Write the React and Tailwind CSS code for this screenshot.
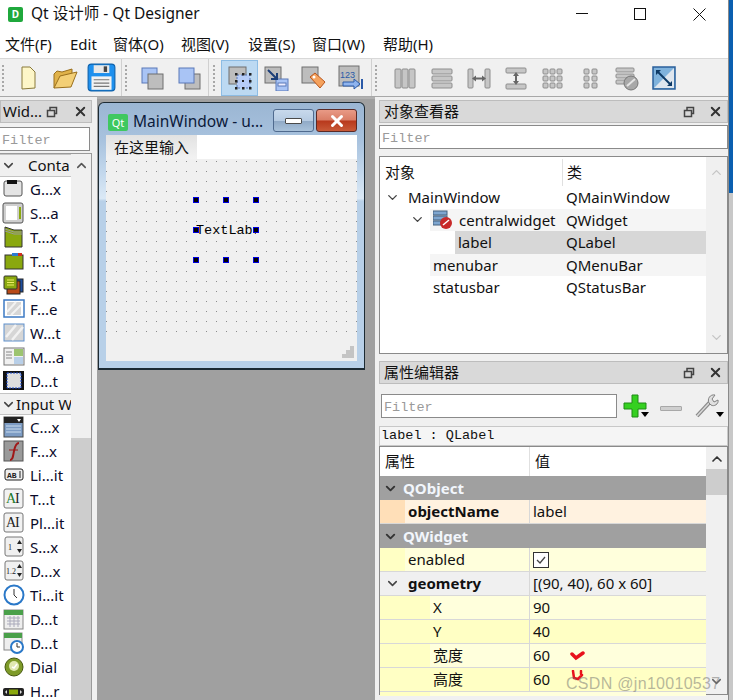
import { ChevronDown, ChevronUp, X } from 'lucide-react'

const mono = "font-['Liberation_Mono','Noto_Sans_CJK_SC',monospace]"

// toolbar icons, all drawn on a 26x26 box
function ToolIcon({ name }) {
  const gray = (x, y, s = 15) => <rect x={x} y={y} width={s} height={s} fill="#bdbdbd" stroke="#6f6f6f" />
  const blue = (x, y, s = 15) => <rect x={x} y={y} width={s} height={s} fill="#a9c4f5" stroke="#5a78b8" />
  const bar = (x, y, w, h, k) => <rect key={k} x={x} y={y} width={w} height={h} rx="1" fill="#c6c6c6" stroke="#8e8e8e" />
  switch (name) {
    case 'new':
      return <path d="M7 2h8l5 5v16l-13 1z" fill="#fdf6c8" stroke="#8a7a3a" />
    case 'open':
      return (
        <g stroke="#9a6f1c">
          <path d="M2 23V9l3-3 5 1 10-3v5z" fill="#e0b24a" />
          <path d="M2 23l6-12 17-4-6 15z" fill="#f3cf76" />
        </g>
      )
    case 'save':
      return (
        <g>
          <rect x="1" y="1" width="24" height="24" rx="3" fill="#1e90ee" stroke="#0f62ac" />
          <rect x="6" y="2" width="14" height="7" fill="#e8e8e8" />
          <rect x="15" y="3" width="3" height="5" fill="#444" />
          <rect x="4" y="12" width="18" height="12" fill="#f2f2f2" />
          <path d="M6 15h14M6 18h14M6 21h14" stroke="#777" />
        </g>
      )
    case 'front':
      return <g>{blue(2, 3)}{gray(8, 9)}</g>
    case 'back':
      return <g>{gray(8, 9)}{blue(2, 3)}</g>
    case 'edit':
      return (
        <g>
          {gray(2, 2, 17)}
          <rect x="10" y="10" width="13" height="13" fill="#b7cdf8" stroke="#5a78b8" strokeDasharray="2 2" />
          {[[9, 9], [16, 9], [23, 9], [9, 16], [23, 16], [9, 23], [16, 23], [23, 23]].map(([x, y]) => (
            <rect key={x + '-' + y} x={x - 1} y={y - 1} width="2.5" height="2.5" fill="#222" />
          ))}
          <rect x="15" y="15" width="2" height="2" fill="#222" />
        </g>
      )
    case 'signal':
      return (
        <g>
          {gray(1, 2, 16)}
          {blue(12, 14, 12)}
          <rect x="14" y="18" width="8" height="3" fill="#eef" stroke="#5a78b8" />
          <path d="M4 5l9 9M13 8v6H7" stroke="#1d3f78" strokeWidth="2" fill="none" />
        </g>
      )
    case 'buddy':
      return (
        <g>
          {gray(1, 2, 16)}
          <path d="M9 12l5-4 10 9-5 6z" fill="#f5a25d" stroke="#b8551c" />
          <circle cx="13" cy="12" r="1.5" fill="#fff" />
        </g>
      )
    case 'tab':
      return (
        <g>
          {gray(1, 1, 20)}
          <text x="2" y="13" fontSize="9" fill="#2a5aa8" fontFamily="Liberation Sans">123</text>
          <path d="M5 17h11v-3l6 5-6 5v-3H5z" fill="#8fb4ee" stroke="#2a5aa8" />
          <path d="M24 14v10" stroke="#2a5aa8" strokeWidth="2" />
        </g>
      )
    case 'h':
      return <g>{[3, 10, 17].map((x) => bar(x, 4, 6, 19, x))}</g>
    case 'v':
      return <g>{[4, 11, 18].map((y) => bar(3, y, 20, 5, y))}</g>
    case 'hs':
      return (
        <g>
          {bar(2, 4, 5, 19, 'a')}
          {bar(19, 4, 5, 19, 'b')}
          <path d="M6 13.5l4-3v2h6v-2l4 3-4 3v-2h-6v2z" fill="#666" />
        </g>
      )
    case 'vs':
      return (
        <g>
          {bar(3, 3, 20, 5, 'a')}
          {bar(3, 19, 20, 5, 'b')}
          <path d="M13 7l3 4h-2v5h2l-3 4-3-4h2v-5h-2z" fill="#666" />
        </g>
      )
    case 'grid':
      return <g>{[3, 10, 17].flatMap((x) => [4, 11, 18].map((y) => bar(x, y, 5, 5, x + '-' + y)))}</g>
    case 'form':
      return <g>{[7, 15].flatMap((x) => [4, 11, 18].map((y) => bar(x, y, 5, 5, x + '-' + y)))}</g>
    case 'break':
      return (
        <g>
          {[3, 9, 15].map((y) => bar(2, y, 18, 4, y))}
          <circle cx="17" cy="18" r="7" fill="#a8a8a8" stroke="#777" />
          <path d="M13 21l8-7" stroke="#e4e4e4" strokeWidth="2" />
        </g>
      )
    case 'adjust':
      return (
        <g>
          <rect x="2" y="2" width="22" height="22" fill="#7fb2dc" stroke="#2a5f9a" strokeWidth="1.5" />
          <path d="M3 23L23 3v20z" fill="#dfe6ee" />
          <path d="M6 6l14 14" stroke="#0e3a66" strokeWidth="2" />
          <path d="M5 5h5l-5 5zM21 21h-5l5-5z" fill="#0e3a66" />
        </g>
      )
    default:
      return null
  }
}

function ToolButton({ name, active }) {
  const size = name === 'save' ? 29 : 26
  return (
    <div className={`w-[37px] h-[36px] flex items-center justify-center border ${active ? 'bg-[#bcd9f2] border-[#8dbce4]' : 'border-transparent'}`}>
      <svg width={size} height={size} viewBox="0 0 26 26">
        <ToolIcon name={name} />
      </svg>
    </div>
  )
}

function Grip({ className }) {
  return <div className={`w-[3px] h-[26px] shrink-0 border-l-2 border-dotted border-[#a8a8a8] ${className}`} />
}

function ToolSection({ width, gripClass, items, active }) {
  return (
    <div className={`${width} h-full flex items-center border-r border-[#d0d0d0]`}>
      <Grip className={gripClass} />
      {items.map((n) => (
        <ToolButton key={n} name={n} active={n === active} />
      ))}
    </div>
  )
}

function DockTitle({ title, compact }) {
  return (
    <div className={`flex items-center bg-[#d9d9d9] border border-[#bdbdbd] ${compact ? 'h-[23px] pl-[2px]' : 'h-[23px] pl-[4px]'} text-[15px] text-[#111]`}>
      <span className="flex-1 whitespace-nowrap overflow-hidden">{title}</span>
      <svg width="12" height="12" viewBox="0 0 12 12" className={compact ? 'mr-[15px]' : 'mr-[13px]'}>
        <path d="M1.5 4.5h7v6h-7zM4 4.5V1.5h6.500v6H8.500" fill="none" stroke="#444" strokeWidth="1.500" />
      </svg>
      <X size={15} strokeWidth={3} className={`text-[#333] ${compact ? 'mr-[3px]' : 'mr-[4px]'}`} />
    </div>
  )
}

function FilterInput({ className }) {
  return (
    <div className={`h-[24px] bg-white border border-[#8a8a8a] flex items-center pl-[2px] pt-[4px] text-[13.500px] text-[#9a9a9a] ${mono} ${className}`}>Filter</div>
  )
}

function WidgetIcon({ name }) {
  const green = '#8aa80e'
  switch (name) {
    case 'group':
      return <g><rect x="2" y="3" width="18" height="15" rx="2" fill="#e4e4e4" stroke="#555" /><rect x="5" y="2" width="10" height="4" fill="#111" /></g>
    case 'scroll':
      return <g><rect x="1" y="1" width="20" height="20" rx="2" fill="#cfcfcf" stroke="#555" /><rect x="4" y="4" width="11" height="14" fill="#fff" /><rect x="17" y="5" width="2" height="12" fill={green} /></g>
    case 'toolbox':
      return <g><path d="M3 1l9 3h8v17H3z" fill={green} stroke="#333" /><path d="M3 5l9 3h8M3 3l9 3h8" stroke="#999" fill="none" /></g>
    case 'tabw':
      return <g><rect x="3" y="5" width="18" height="14" fill={green} stroke="#333" /><rect x="10" y="3" width="6" height="3" fill="#2c7bd0" /><rect x="16" y="3" width="4" height="3" fill="#d03020" /></g>
    case 'stack':
      return <g><rect x="8" y="5" width="13" height="13" fill="#1f4fa0" stroke="#222" /><rect x="5" y="7" width="13" height="13" fill="#b84a18" stroke="#222" /><rect x="2" y="2" width="13" height="13" rx="1" fill={green} stroke="#333" /><path d="M5 6h7M5 8.500h7M5 11h7" stroke="#ee6" /></g>
    case 'frame':
      return <g><rect x="2" y="2" width="20" height="17" fill="#fff" stroke="#3d7ac4" strokeWidth="1.500" /><rect x="5" y="4" width="14" height="13" fill="#d6d6d6" /><path d="M5 14l9-10M9 17l10-10" stroke="#f2f2f2" strokeWidth="2" /></g>
    case 'widget':
      return <g><rect x="2" y="2" width="20" height="17" fill="#d6d6d6" stroke="#5e90cc" /><path d="M4 15l10-12M10 18l11-13" stroke="#f2f2f2" strokeWidth="2.500" /></g>
    case 'mdi':
      return <g><rect x="2" y="2" width="20" height="17" fill="#f0f0f0" stroke="#777" /><rect x="12" y="3" width="9" height="7" fill="#9cc470" /><path d="M4 6h6M4 9h6M4 12h6" stroke="#888" /><rect x="12" y="11" width="9" height="7" fill="#b8cfe8" /></g>
    case 'dock':
      return <g><rect x="1" y="1" width="21" height="19" fill="#111" /><rect x="5" y="3" width="14" height="15" fill="#ddd" stroke="#1f4fd0" strokeDasharray="2 1" /></g>
    case 'combo':
      return <g><rect x="2" y="1" width="19" height="20" fill="#7d9cc4" stroke="#444" /><rect x="2" y="1" width="19" height="6" fill="#222" /><path d="M15 3h4l-2 3z" fill="#fff" /><path d="M4 10h15M4 13h15M4 16h15" stroke="#cde" /></g>
    case 'font':
      return <g><rect x="2" y="1" width="19" height="20" fill="#9a9a9a" stroke="#555" /><path d="M8 20c3 0 3-4 4-9s2-8 5-8" fill="none" stroke="#a01818" strokeWidth="2" /><path d="M7 10h9" stroke="#a01818" /></g>
    case 'line':
      return <g><rect x="3" y="5" width="18" height="11" rx="2" fill="#eee" stroke="#222" /><text x="5" y="14" fontSize="8" fontWeight="700" fill="#222" fontFamily="Liberation Mono">AB</text><path d="M18 7v7" stroke="#222" /></g>
    case 'text':
    case 'plain':
      return <g><rect x="2" y="1" width="19" height="19" rx="2" fill="#f2f2f2" stroke="#777" /><text x="4" y="15" fontSize="14" fill={name === 'text' ? '#1c7a2a' : '#222'} fontFamily="Liberation Serif">A</text><text x="13" y="15" fontSize="14" fill="#222" fontFamily="Liberation Serif">I</text></g>
    case 'spin':
    case 'dspin':
      return <g><rect x="3" y="1" width="18" height="19" rx="2" fill="#f0f0f0" stroke="#777" /><text x={name === 'spin' ? 6 : 4} y="14" fontSize="8" fill="#222" fontFamily="Liberation Serif">{name === 'spin' ? '1' : '1.2'}</text><path d="M15 8l2.500-4 2.500 4zM15 13l2.500 4 2.500-4z" fill="#222" /></g>
    case 'time':
      return <g><circle cx="12" cy="11" r="9.500" fill="#fff" stroke="#2a78c8" strokeWidth="2" /><path d="M12 5v6l3 3" stroke="#333" fill="none" /></g>
    case 'date':
      return <g><rect x="2" y="2" width="19" height="19" fill="#eee" stroke="#888" /><rect x="2" y="2" width="19" height="5" fill="#4aa04a" /><path d="M5 10h13M5 13h13M5 16h13M8 8v11M12 8v11M16 8v11" stroke="#aab" /></g>
    case 'datetime':
      return <g><rect x="2" y="1" width="18" height="17" fill="#eee" stroke="#888" /><rect x="2" y="1" width="18" height="5" fill="#4aa04a" /><circle cx="15" cy="15" r="6" fill="#fff" stroke="#2a78c8" strokeWidth="2" /><path d="M15 11v4h3" stroke="#333" fill="none" /></g>
    case 'dial':
      return <g><circle cx="12" cy="11" r="9" fill="#7d9a28" stroke="#46580f" /><circle cx="12" cy="10" r="5" fill="#dfe8b0" /><path d="M10 11l2 1 3-4" stroke="#fff" strokeWidth="1.500" fill="none" /></g>
    case 'hscroll':
      return <g><rect x="1" y="8" width="21" height="8" rx="2" fill="#222" /><rect x="7" y="9.500" width="9" height="5" fill={green} /><path d="M5 10v4l-2-2zM18 10v4l2-2z" fill="#ddd" /></g>
    default:
      return null
  }
}

function WidgetRow({ icon, label }) {
  return (
    <div className="h-[24px] flex items-center pl-[2px] text-[15px] text-[#0a0a2a] whitespace-nowrap">
      <svg width="24" height="22" viewBox="0 0 24 22" className="shrink-0">
        <WidgetIcon name={icon} />
      </svg>
      <span className="ml-[4px]">{label}</span>
    </div>
  )
}

function WidgetHeader({ label, className }) {
  return (
    <div className={`flex items-center bg-[#f0f0f0] border-y border-[#c4c4c4] pl-[1px] text-[15px] text-[#111] whitespace-nowrap overflow-hidden ${className}`}>
      <ChevronDown size={15} strokeWidth={2.500} className="text-[#444] shrink-0" />
      <span>{label}</span>
    </div>
  )
}

function LeftDock() {
  const contain = [
    ['group', 'G...x'], ['scroll', 'S...a'], ['toolbox', 'T...x'], ['tabw', 'T...t'], ['stack', 'S...t'],
    ['frame', 'F...e'], ['widget', 'W...t'], ['mdi', 'M...a'], ['dock', 'D...t'],
  ]
  const input = [
    ['combo', 'C...x'], ['font', 'F...x'], ['line', 'Li...it'], ['text', 'T...t'], ['plain', 'Pl...it'],
    ['spin', 'S...x'], ['dspin', 'D...x'], ['time', 'Ti...it'], ['date', 'D...t'], ['datetime', 'D...t'],
    ['dial', 'Dial'], ['hscroll', 'H...r'],
  ]
  return (
    <div className="w-[97px] shrink-0 pt-[3px] pr-[5px] flex flex-col bg-[#f0f0f0]">
      <DockTitle title="Wid..." compact />
      <FilterInput className="mt-[4px] -ml-[1px] mr-[2px]" />
      <div className="mt-[2px] flex-1 flex border-r border-t border-[#9a9a9a] min-h-0 overflow-hidden">
        <div className="w-[71px] shrink-0 bg-white overflow-hidden">
          <WidgetHeader label="Conta" className="h-[23px] [&>span]:ml-[12px]" />
          {contain.map(([i, l], k) => <WidgetRow key={k} icon={i} label={l} />)}
          <WidgetHeader label="Input W" className="h-[22px] [&>span]:ml-0" />
          {input.map(([i, l], k) => <WidgetRow key={k} icon={i} label={l} />)}
        </div>
        <div className="flex-1 flex flex-col">
          <div className="h-[284px] bg-[#f0f0f0] flex justify-center pt-[4px]">
            <ChevronUp size={15} strokeWidth={2.500} className="text-[#555]" />
          </div>
          <div className="flex-1 bg-[#cdcdcd]" />
        </div>
      </div>
    </div>
  )
}

function Handle({ x, y }) {
  return (
    <div className="absolute w-[6px] h-[6px] bg-black border-[1.500px] border-[#0000e0]" style={{ left: x, top: y }} />
  )
}

function FormWindow() {
  const spots = [0, 30, 60]
  return (
    <div className="ml-[1px] mt-[3px] w-[267px] h-[268px] flex flex-col rounded-t-[6px] border border-[#1c2a33] border-b-2 bg-[linear-gradient(180deg,#9bb6d3_0%,#a8c2de_14%,#c2d7ec_26%,#dbe9f6_36%,#b8d0e8_37%,#b8d0e8_100%)] px-[7px] pb-[7px]">
      <div className="h-[32px] shrink-0 flex items-center relative -mx-[7px] pl-[9px]">
        <div className="w-[20px] h-[17px] mt-[7px] rounded-[2px] bg-[#3fc860] text-white text-[11px] leading-[17px] text-center">Qt</div>
        <span className="ml-[5px] mt-[5px] text-[15.500px] text-[#0c1a3a] whitespace-nowrap">MainWindow - u...</span>
        <div className="absolute left-[174px] top-[6px] w-[41px] h-[23px] rounded-[3px] border border-[#4f6a8e] bg-[linear-gradient(180deg,#c8d9ec_0%,#b6cbe2_50%,#8fa9c6_52%,#a9c2da_100%)] flex items-center justify-center">
          <div className="w-[17px] h-[6px] rounded-[1px] bg-white border border-[#4a4a4a]" />
        </div>
        <div className="absolute left-[217px] top-[6px] w-[41px] h-[23px] rounded-[3px] border border-[#5a2a26] bg-[linear-gradient(180deg,#e89a86_0%,#d97d66_48%,#b8381c_52%,#c85a38_100%)] flex items-center justify-center">
          <X size={18} strokeWidth={4} className="text-white" />
        </div>
      </div>
      <div className="h-[24px] shrink-0 bg-white">
        <div className="w-[91px] h-full bg-[linear-gradient(180deg,#e2e2e2,#f2f2f2)] pl-[8px] text-[15px] leading-[24px] text-[#111] whitespace-nowrap">在这里输入</div>
      </div>
      <div className="relative h-[176px] shrink-0 bg-[#f0f0f0] bg-[radial-gradient(circle_at_0.5px_0.5px,#8c8c8c_0.7px,transparent_0.8px)] bg-[length:10px_10px] bg-[position:0_2px]">
        <div className={`absolute left-[90px] top-[60px] w-[60px] h-[24px] overflow-hidden whitespace-nowrap text-[13.500px] leading-[24px] text-black ${mono}`}>TextLabel</div>
        {spots.map((dx) => spots.map((dy) => (
          dx === 30 && dy === 30 ? null : <Handle key={dx + '-' + dy} x={87 + dx} y={38 + dy} />
        )))}
      </div>
      <div className="flex-1 bg-[#f0f0f0] flex justify-end items-end pr-[3px] pb-[3px]">
        <svg width="12" height="12" viewBox="0 0 12 12">
          <path d="M8 0h4v4H8zM4 4h4v4H4zM8 4h4v4H8zM0 8h4v4H0zM4 8h4v4H4zM8 8h4v4H8z" fill="#c4c4c4" />
        </svg>
      </div>
    </div>
  )
}

function TreeRow({ indent, arrow, icon, name, cls, bg = '' }) {
  return (
    <div className="h-[22.500px] flex items-center text-[15px] text-[#111] whitespace-nowrap">
      <div className="w-[184px] h-full flex items-center shrink-0 relative">
        {arrow && <ChevronDown size={15} strokeWidth={2.200} className="absolute text-[#444]" style={{ left: arrow }} />}
        <div className={`absolute top-0 bottom-0 right-0 flex items-center ${bg}`} style={{ left: indent }}>
          {icon && (
            <svg width="20" height="20" viewBox="0 0 20 20" className="ml-[3px] mr-[6px] shrink-0">
              <rect x="0" y="1" width="14" height="4" fill="#7ea6d0" stroke="#44607e" />
              <rect x="0" y="6" width="14" height="4" fill="#7ea6d0" stroke="#44607e" />
              <rect x="0" y="11" width="8" height="4" fill="#7ea6d0" stroke="#44607e" />
              <circle cx="13" cy="13" r="6" fill="#c82a2a" />
              <path d="M10 15l6-5" stroke="#fff" strokeWidth="1.500" />
            </svg>
          )}
          <span className={icon ? '' : 'pl-[3px]'}>{name}</span>
        </div>
      </div>
      <div className={`flex-1 h-full flex items-center pl-[2px] ${bg}`}>{cls}</div>
    </div>
  )
}

function ScrollTrack({ children, className = '' }) {
  return <div className={`w-[21px] shrink-0 bg-[#f0f0f0] flex flex-col items-center ${className}`}>{children}</div>
}

function ObjectInspector() {
  return (
    <div className="mt-[7px] h-[198px] flex bg-white border border-[#8a8a8a]">
      <div className="flex-1 flex flex-col">
        <div className="h-[29px] pt-[2px] flex items-center text-[15px] text-[#111] shrink-0">
          <div className="w-[183px] h-full pl-[5px] flex items-center border-r border-[#e0e0e0]">对象</div>
          <div className="pl-[4px]">类</div>
        </div>
        <TreeRow indent={25} arrow={5} name="MainWindow" cls="QMainWindow" />
        <TreeRow indent={50} arrow={30} icon name="centralwidget" cls="QWidget" bg="bg-[#f5f5f5]" />
        <TreeRow indent={75} name="label" cls="QLabel" bg="bg-[#d7d7d7]" />
        <TreeRow indent={50} name="menubar" cls="QMenuBar" bg="bg-[#f5f5f5]" />
        <TreeRow indent={50} name="statusbar" cls="QStatusBar" />
      </div>
      <ScrollTrack className="justify-between py-[8px]">
        <ChevronUp size={15} strokeWidth={2} className="text-[#c4c4c4]" />
        <ChevronDown size={15} strokeWidth={2} className="text-[#c4c4c4]" />
      </ScrollTrack>
    </div>
  )
}

function DropArrow({ className }) {
  return <div className={`w-0 h-0 border-x-[4px] border-x-transparent border-t-[5px] border-t-black self-end mb-[1px] ${className}`} />
}

function PropToolbar() {
  return (
    <div className="h-[42px] flex items-end pb-[8px] pl-[2px]">
      <FilterInput className="w-[236px]" />
      <svg width="24" height="24" viewBox="0 0 24 24" className="ml-[6px]">
        <path d="M9 1h6v8h8v6h-8v8H9v-8H1V9h8z" fill="#35d020" stroke="#1e8a14" />
      </svg>
      <DropArrow className="-ml-[6px]" />
      <div className="ml-[11px] mb-[7px] w-[22px] h-[5px] rounded-[1px] bg-[#cfcfcf] border border-[#a8a8a8]" />
      <svg width="26" height="26" viewBox="0 0 26 26" className="ml-[13px]">
        <path d="M2 24L15 10" stroke="#8a8a8a" strokeWidth="4" />
        <path d="M2 24L15 10" stroke="#d8d8d8" strokeWidth="1.500" />
        <path d="M14 11c-2-4 1-9 6-8l-3 4 2 3 4-2c1 4-4 7-7 5z" fill="#e0e0e0" stroke="#808080" />
      </svg>
      <DropArrow className="-ml-[5px]" />
    </div>
  )
}

function PropGroup({ label }) {
  return (
    <div className="h-[24px] flex items-center bg-[#a0a0a0] pl-[3px] text-[15px] font-bold text-[#f2f6fc]">
      <ChevronDown size={15} strokeWidth={3} className="text-[#333] shrink-0" />
      <span className="ml-[5px]">{label}</span>
    </div>
  )
}

function PropRow({ name, value, depth = 0, bold, arrow, gutter, nameBg, valueBg, children }) {
  return (
    <div className={`h-[24px] flex text-[15px] text-[#111] border-b border-[#d8d8d8] whitespace-nowrap ${valueBg}`}>
      <div className="w-[150px] flex shrink-0 border-r border-[#d8d8d8]">
        <div className={`${depth ? 'w-[50px]' : 'w-[25px]'} shrink-0 flex items-center justify-center ${gutter}`}>
          {arrow && <ChevronDown size={15} strokeWidth={2.500} className="text-[#444]" />}
        </div>
        <div className={`flex-1 flex items-center pl-[3px] ${nameBg} ${bold ? 'font-bold' : ''}`}>{name}</div>
      </div>
      <div className="flex-1 flex items-center pl-[3px] relative">{value}{children}</div>
    </div>
  )
}

function PropertyEditor() {
  const light = 'bg-[#ffffdc]'
  const deep = 'bg-[#ffffc4]'
  return (
    <div className="flex-1 min-h-0 flex bg-white border border-[#8a8a8a] mb-[5px] relative">
      <div className="flex-1 min-w-0">
        <div className="h-[29px] flex items-center text-[15px] text-[#111]">
          <div className="w-[150px] h-full pl-[5px] flex items-center border-r border-[#e0e0e0]">属性</div>
          <div className="pl-[5px]">值</div>
        </div>
        <PropGroup label="QObject" />
        <PropRow name="objectName" value="label" bold gutter="bg-[#ffdfb8]" nameBg="bg-[#fff2e0]" valueBg="bg-[#fff2e0]" />
        <PropGroup label="QWidget" />
        <PropRow
          name="enabled"
          gutter={deep}
          nameBg={light}
          valueBg={light}
          value={
            <div className="w-[16px] h-[16px] bg-white border border-[#333] flex items-center justify-center">
              <svg width="12" height="12" viewBox="0 0 12 12"><path d="M2 6l3 3 5-6" fill="none" stroke="#444" strokeWidth="1.300" /></svg>
            </div>
          }
        />
        <PropRow name="geometry" value="[(90, 40), 60 x 60]" bold arrow gutter="bg-[#f0f0f0]" nameBg="bg-[#f0f0f0]" valueBg="bg-[#f0f0f0]" />
        <PropRow name="X" value="90" depth={1} gutter={deep} nameBg={light} valueBg={light} />
        <PropRow name="Y" value="40" depth={1} gutter={deep} nameBg={deep} valueBg={deep} />
        <PropRow name="宽度" value="60" depth={1} gutter={deep} nameBg={light} valueBg={light}>
          <svg width="16" height="12" viewBox="0 0 16 12" className="absolute left-[40px] top-[6px]">
            <path d="M2 4l4 4 7-5" fill="none" stroke="#e8121c" strokeWidth="3.500" strokeLinecap="round" />
          </svg>
        </PropRow>
        <PropRow name="高度" value="60" depth={1} gutter={deep} nameBg={deep} valueBg={deep}>
          <svg width="16" height="14" viewBox="0 0 16 14" className="absolute left-[40px] top-[2px]">
            <path d="M3 1l1 7 4 1 4-4M11 1v3" fill="none" stroke="#e8121c" strokeWidth="2.500" strokeLinecap="round" />
          </svg>
        </PropRow>
        <div className={`h-[4px] flex ${light}`}>
          <div className={`w-[50px] ${deep}`} />
        </div>
      </div>
      <ScrollTrack>
        <ChevronUp size={16} strokeWidth={2.500} className="text-[#333] mt-[4px] shrink-0" />
        <div className="w-full h-[26px] bg-[#cdcdcd] mt-[2px]" />
        <div className="flex-1" />
        <ChevronDown size={15} strokeWidth={2.500} className="text-[#666] mb-[5px]" />
      </ScrollTrack>
      <div className="absolute left-[186px] top-[225px] text-[16px] tracking-[0.300px] text-[#6e6e6e]/50 font-['Liberation_Sans',sans-serif] whitespace-nowrap">CSDN @jn10010537</div>
    </div>
  )
}

function RightDock() {
  return (
    <div className="flex-1 min-w-0 pt-[3px] pl-[4px] flex flex-col bg-[#f0f0f0]">
      <DockTitle title="对象查看器" />
      <FilterInput className="mt-[2px]" />
      <ObjectInspector />
      <div className="h-[7px] shrink-0" />
      <DockTitle title="属性编辑器" />
      <PropToolbar />
      <div className={`h-[20px] shrink-0 bg-[#f5f5f5] border border-[#c8c8c8] pl-[1px] text-[13.500px] leading-[18px] text-[#111] ${mono}`}>label : QLabel</div>
      <PropertyEditor />
    </div>
  )
}

export default function App() {
  return (
    <div className="w-[733px] h-[700px] flex overflow-hidden bg-white font-['Noto_Sans','Noto_Sans_CJK_SC',sans-serif]">
      <div className="w-[729px] shrink-0 flex flex-col border-r border-[#8a8a8a]">
        <div className="h-[32px] shrink-0 pb-[4px] flex items-center relative">
          <div className="ml-[8px] w-[15px] h-[15px] rounded-[2px] bg-[#1fa83c] text-white text-[10px] leading-[15px] text-center font-bold">D</div>
          <span className="ml-[8px] text-[15.500px] text-[#111]">Qt 设计师 - Qt Designer</span>
          <svg width="13" height="13" viewBox="0 0 13 13" className="absolute left-[576px] top-[8px]"><path d="M0 5.500h12" stroke="#111" /></svg>
          <svg width="13" height="13" viewBox="0 0 13 13" className="absolute left-[634px] top-[8px]"><rect x="0.500" y="0.500" width="11" height="11" fill="none" stroke="#111" /></svg>
          <svg width="13" height="13" viewBox="0 0 13 13" className="absolute left-[693px] top-[8px]"><path d="M0.500 0.500l12 12M12.500 0.500l-12 12" stroke="#111" /></svg>
        </div>
        <div className="h-[26px] shrink-0 pb-[2px] flex items-center text-[15px] text-[#111] whitespace-nowrap">
          <span className="ml-[5px] w-[65px]">文件(F)</span>
          <span className="w-[43px]">Edit</span>
          <span className="w-[68px]">窗体(O)</span>
          <span className="w-[67px]">视图(V)</span>
          <span className="w-[64px]">设置(S)</span>
          <span className="w-[71px]">窗口(W)</span>
          <span>帮助(H)</span>
        </div>
        <div className="h-[39px] shrink-0 flex items-center bg-[#f0f0f0] border-y border-[#d8d8d8] border-b-[#a8a8a8]">
          <ToolSection width="w-[122px]" gripClass="ml-[2px] mr-[4px]" items={['new', 'open', 'save']} />
          <ToolSection width="w-[87px]" gripClass="ml-[3px] mr-[6px]" items={['front', 'back']} />
          <ToolSection width="w-[163px]" gripClass="ml-[4px] mr-[5px]" items={['edit', 'signal', 'buddy', 'tab']} active="edit" />
          <div className="flex-1 h-full flex items-center">
            <Grip className="ml-[3px] mr-[8px]" />
            {['h', 'v', 'hs', 'vs', 'grid', 'form', 'break', 'adjust'].map((n) => <ToolButton key={n} name={n} />)}
          </div>
        </div>
        <div className="flex-1 min-h-0 flex">
          <LeftDock />
          <div className="w-[278px] shrink-0 bg-[#a0a0a0] border-t-2 border-[#b0b0b0]">
            <FormWindow />
          </div>
          <RightDock />
        </div>
      </div>
      <div className="flex-1 flex flex-col">
        <div className="h-[193px] bg-[#0a5fb0]" />
        <div className="flex-1 bg-[#c8c8c8]" />
      </div>
    </div>
  )
}
